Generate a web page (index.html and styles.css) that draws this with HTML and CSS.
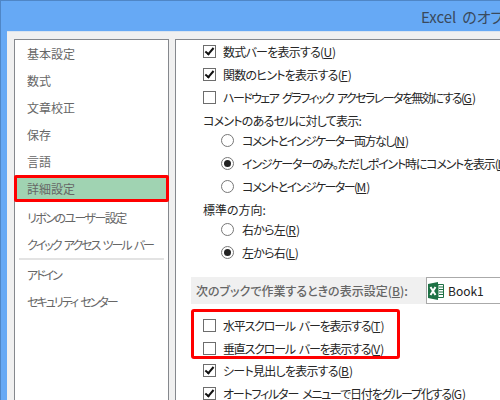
FILE: index.html
```html
<!DOCTYPE html>
<html lang="ja">
<head>
  <meta charset="UTF-8">
  <title>Excel のオプション</title>
  <link rel="stylesheet" href="styles.css">
</head>
<body>
  <div class="window">
    <div class="titlebar">Excel のオプション</div>
    <div class="dialog">
      <ul class="nav">
        <li>基本設定</li>
        <li>数式</li>
        <li>文章校正</li>
        <li>保存</li>
        <li>言語</li>
        <li class="selected">詳細設定</li>
        <li class="fit-l">リボンのユーザー設定</li>
        <li class="fit-xl">クイック アクセス ツール バー</li>
        <li class="separator"></li>
        <li class="fit-xl">アドイン</li>
        <li class="fit-xl">セキュリティ センター</li>
      </ul>
      <div class="pane">
        <div class="row"><span class="check on"></span><span class="fit-s">数式バーを表示する(<u>U</u>)</span></div>
        <div class="row"><span class="check on"></span><span class="fit-s">関数のヒントを表示する(<u>F</u>)</span></div>
        <div class="row"><span class="check"></span><span class="fit-l">ハードウェア グラフィック アクセラレータを無効にする(<u>G</u>)</span></div>
        <div class="label fit-s">コメントのあるセルに対して表示:</div>
        <div class="row indent"><span class="radio"></span><span class="fit-l">コメントとインジケーター両方なし(<u>N</u>)</span></div>
        <div class="row indent"><span class="radio on"></span><span class="fit-m">インジケーターのみ。ただしポイント時にコメントを表示(<u>I</u>)</span></div>
        <div class="row indent"><span class="radio"></span><span class="fit-l">コメントとインジケーター(<u>M</u>)</span></div>
        <div class="label">標準の方向:</div>
        <div class="row indent"><span class="radio"></span><span class="fit-s">右から左(<u>R</u>)</span></div>
        <div class="row indent"><span class="radio on"></span><span class="fit-s">左から右(<u>L</u>)</span></div>
        <div class="section">
          <span class="section-title">次のブックで作業するときの表示設定(<u>B</u>):</span>
          <div class="book">
            <svg class="xl-icon" width="16" height="18" viewBox="0 0 16 18">
              <path d="M0 2 L10 0 V18 L0 16 Z" fill="#1e7145"/>
              <path d="M2.5 5 L7.5 13 M7.5 5 L2.5 13" stroke="#fff" stroke-width="2" fill="none"/>
              <path d="M10 2.5 H15.5 V15.5 H10 Z" fill="#fff" stroke="#1e7145"/>
              <path d="M11 5 H15 M11 7.5 H15 M11 10 H15 M11 12.5 H15" stroke="#1e7145"/>
            </svg>
            <span>Book1</span>
          </div>
        </div>
        <div class="highlight">
          <div class="row"><span class="check"></span><span class="fit-m">水平スクロール バーを表示する(<u>T</u>)</span></div>
          <div class="row"><span class="check"></span><span class="fit-m">垂直スクロール バーを表示する(<u>V</u>)</span></div>
        </div>
        <div class="row"><span class="check on"></span><span class="fit-s">シート見出しを表示する(<u>B</u>)</span></div>
        <div class="row"><span class="check on"></span><span class="fit-m">オートフィルター メニューで日付をグループ化する(<u>G</u>)</span></div>
      </div>
    </div>
  </div>
</body>
</html>
```

FILE: styles.css
```css
html, body {
  margin: 0;
  padding: 0;
  overflow: hidden;
}

body {
  width: 500px;
  height: 400px;
  font-family: "Noto Sans CJK JP", "Noto Sans", sans-serif;
  font-size: 12px;
  font-feature-settings: "palt";
  color: #262626;
  word-spacing: 2.5px;
}

u {
  letter-spacing: 0;
}

/* kana in the original font is narrower than in Noto, so rows are tightened by how much kana they hold */
.fit-s {
  letter-spacing: -0.75px;
}

.fit-m {
  letter-spacing: -1.2px;
}

.fit-l {
  letter-spacing: -1.55px;
}

.fit-xl {
  letter-spacing: -2px;
}

.window {
  height: 399px;
  border-top: 1px solid #4f86c6;
  border-left: 1px solid #4f86c6;
  background: #66a9f5;
  overflow: hidden;
}

.titlebar {
  height: 30px;
  line-height: 32px;
  padding-left: 420px;
  font-size: 15px;
  color: #3a4a5c;
  white-space: nowrap;
  overflow: hidden;
}

.dialog {
  display: flex;
  gap: 6px;
  height: 369px;
  margin-left: 6px;
  padding: 7px 0 0 7px;
  background: #f0f0f0;
  border-top: 1px solid #d9e4f0;
  box-sizing: border-box;
}

.nav {
  flex: none;
  width: 155px;
  margin: 0;
  padding: 0;
  list-style: none;
  box-sizing: border-box;
  background: #fff;
  border: 1px solid #85888d;
  border-bottom: none;
  color: #666;
}

.nav li {
  height: 27px;
  line-height: 27px;
  padding-left: 12px;
  white-space: nowrap;
}

.nav .selected {
  box-sizing: border-box;
  margin: 0 -1px;
  padding-left: 10px;
  line-height: 21px;
  background: #a0d3b2;
  border: 3px solid #f00;
  border-radius: 2px;
}

.nav li:nth-child(7) {
  margin-top: 2px;
}

.nav .separator {
  height: 2px;
  margin: 0 4px;
  padding: 0;
  background: #e3e3e3;
}

.nav .separator + li {
  margin-top: 1px;
}

.pane {
  flex: 1;
  min-width: 0;
  padding-left: 27px;
  background: #fff;
  border-left: 1px solid #85888d;
  border-top: 1px solid #85888d;
  white-space: nowrap;
}

.row {
  display: flex;
  align-items: center;
  gap: 7px;
  height: 23px;
}

.label {
  height: 20px;
  line-height: 23px;
}

.indent {
  padding-left: 18px;
  gap: 8px;
}

.check {
  flex: none;
  position: relative;
  width: 11px;
  height: 11px;
  background: #fff;
  border: 1px solid #6d6d6d;
}

.check.on::after {
  content: "";
  position: absolute;
  left: 3px;
  top: 0;
  width: 3px;
  height: 7px;
  border: solid #111;
  border-width: 0 2px 2px 0;
  transform: rotate(40deg);
}

.radio {
  flex: none;
  position: relative;
  width: 11px;
  height: 11px;
  background: #fff;
  border: 1px solid #777;
  border-radius: 50%;
}

.radio.on::after {
  content: "";
  position: absolute;
  left: 2px;
  top: 2px;
  width: 7px;
  height: 7px;
  border-radius: 50%;
  background: #222;
}

.section {
  display: flex;
  align-items: center;
  height: 27px;
  margin: 13px 0 0 -12px;
  padding-left: 5px;
  background: #f0f0f0;
}

.section-title {
  flex: none;
  width: 230px;
  font-weight: 500;
  color: #666;
}

.book {
  flex: 1;
  display: flex;
  align-items: center;
  gap: 4px;
  height: 27px;
  box-sizing: border-box;
  padding-left: 1px;
  background: #fff;
  border: 1px solid #aaa;
  border-right: none;
  color: #222;
}

.xl-icon {
  flex: none;
}

.highlight {
  box-sizing: border-box;
  width: 209px;
  height: 50px;
  margin: 5px 0 0 -12px;
  padding: 2px 0 0 9px;
  border: 3px solid #f00;
  border-radius: 3px;
}
```
